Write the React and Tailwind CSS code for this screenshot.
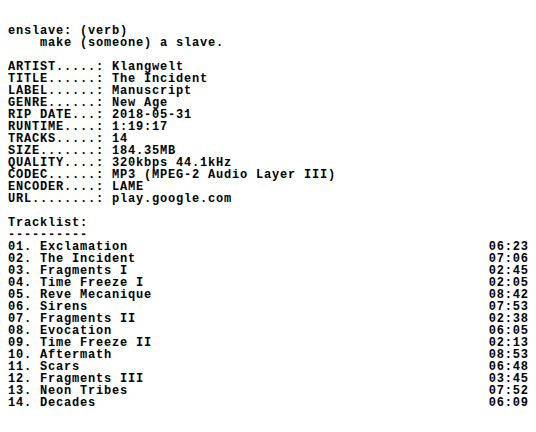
const info = [
  "ARTIST.....: Klangwelt",
  "TITLE......: The Incident",
  "LABEL......: Manuscript",
  "GENRE......: New Age",
  "RIP DATE...: 2018-05-31",
  "RUNTIME....: 1:19:17",
  "TRACKS.....: 14",
  "SIZE.......: 184.35MB",
  "QUALITY....: 320kbps 44.1kHz",
  "CODEC......: MP3 (MPEG-2 Audio Layer III)",
  "ENCODER....: LAME",
  "URL........: play.google.com",
];

const tracks = [
  ["01", "Exclamation", "06:23"],
  ["02", "The Incident", "07:06"],
  ["03", "Fragments I", "02:45"],
  ["04", "Time Freeze I", "02:05"],
  ["05", "Reve Mecanique", "08:42"],
  ["06", "Sirens", "07:53"],
  ["07", "Fragments II", "02:38"],
  ["08", "Evocation", "06:05"],
  ["09", "Time Freeze II", "02:13"],
  ["10", "Aftermath", "08:53"],
  ["11", "Scars", "06:48"],
  ["12", "Fragments III", "03:45"],
  ["13", "Neon Tribes", "07:52"],
  ["14", "Decades", "06:09"],
];

const Line = ({ children }) => (
  <div className="h-[12px] whitespace-pre">{children}</div>
);

export default function App() {
  // 12px mono + 0.8px tracking = 8px per cell, like the DOS terminal font
  return (
    <div className="w-[536px] h-[432px] bg-white text-black pl-[8px] pr-[8px] pt-[25px] font-['Liberation_Mono',monospace] font-bold text-[12px] leading-[12px] tracking-[0.8px]">
      <Line>enslave: (verb)</Line>
      <Line>{"    make (someone) a slave."}</Line>
      <Line />

      {info.map((row) => (
        <Line key={row}>{row}</Line>
      ))}
      <Line />

      <Line>Tracklist:</Line>
      <Line>----------</Line>
      {tracks.map(([no, title, time]) => (
        <div key={no} className="flex justify-between h-[12px] whitespace-pre">
          <span>{`${no}. ${title}`}</span>
          <span className="-mr-[0.8px]">{time}</span>
        </div>
      ))}
    </div>
  );
}
